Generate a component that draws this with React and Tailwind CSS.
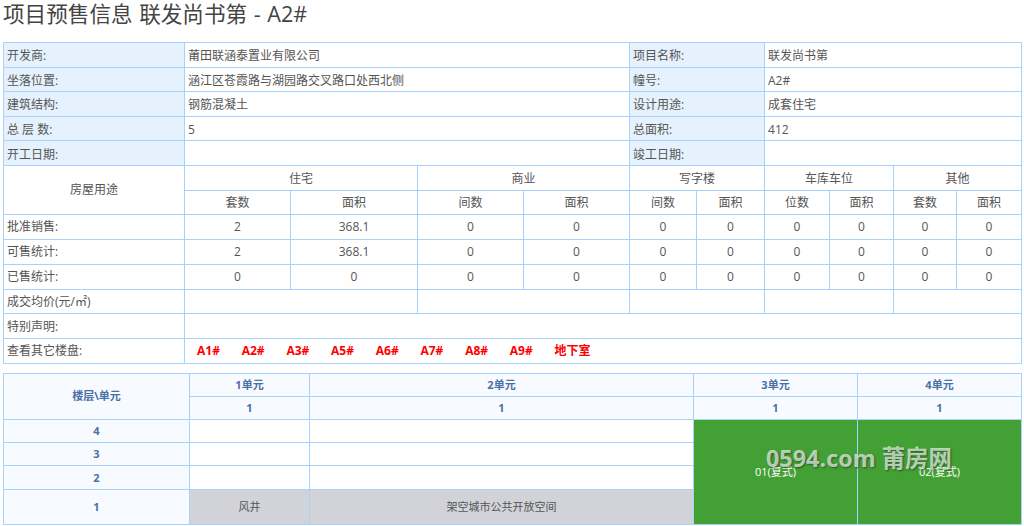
const labelCls = 'border border-[#a6d2fc] bg-[#e5f1fc] pl-[3px] pt-[3px] text-left font-normal'
const infoValueCls = 'border border-[#a6d2fc] pl-[3px] pt-[3px] text-left'
const valueCls = 'border border-[#a6d2fc] pl-[3px] pt-px text-left'
const centerCls = 'border border-[#a6d2fc] pt-px text-center'

const infoRows = [
  ['开发商:', '莆田联涵泰置业有限公司', '项目名称:', '联发尚书第'],
  ['坐落位置:', '涵江区苍霞路与湖园路交叉路口处西北侧', '幢号:', 'A2#'],
  ['建筑结构:', '钢筋混凝土', '设计用途:', '成套住宅'],
  ['总 层 数:', '5', '总面积:', '412'],
  ['开工日期:', '', '竣工日期:', ''],
]

const statRows = [
  ['批准销售:', '2', '368.1'],
  ['可售统计:', '2', '368.1'],
  ['已售统计:', '0', '0'],
]

const subHeads = ['套数', '面积', '间数', '面积', '间数', '面积', '位数', '面积', '套数', '面积']
const topCols = ['w-[181px]', 'w-[106px]', 'w-[127px]', 'w-[106px]', 'w-[106px]', 'w-[67px]', 'w-[68px]', 'w-[65px]', 'w-[64px]', 'w-[63px]', 'w-[65px]']
const links = ['A1#', 'A2#', 'A3#', 'A5#', 'A6#', 'A7#', 'A8#', 'A9#', '地下室']
const typeHeads = ['住宅', '商业', '写字楼', '车库车位', '其他']

function InfoTable() {
  return (
    <table className="ml-[3px] w-[1019px] table-fixed border-collapse text-[12px] text-[#555]">
      <colgroup>
        {topCols.map((c, i) => (
          <col key={i} className={c} />
        ))}
      </colgroup>
      <tbody>
        {infoRows.map((r) => (
          <tr key={r[0]} className="h-[24.6px]">
            <th className={labelCls}>{r[0]}</th>
            <td colSpan={4} className={infoValueCls}>{r[1]}</td>
            <th colSpan={2} className={labelCls}>{r[2]}</th>
            <td colSpan={4} className={infoValueCls}>{r[3]}</td>
          </tr>
        ))}
        <tr className="h-[25px]">
          <td rowSpan={2} className={centerCls}>房屋用途</td>
          {typeHeads.map((h) => (
            <td key={h} colSpan={2} className="border border-[#a6d2fc] pt-[3px] text-center">{h}</td>
          ))}
        </tr>
        <tr className="h-[24px]">
          {subHeads.map((h, i) => (
            <td key={i} className={centerCls}>{h}</td>
          ))}
        </tr>
        {statRows.map((r) => (
          <tr key={r[0]} className="h-[25px]">
            <td className={valueCls}>{r[0]}</td>
            <td className={centerCls}>{r[1]}</td>
            <td className={centerCls}>{r[2]}</td>
            {Array.from({ length: 8 }).map((_, i) => (
              <td key={i} className={centerCls}>0</td>
            ))}
          </tr>
        ))}
        <tr className="h-[24.5px]">
          <td className={valueCls}>成交均价(元/㎡)</td>
          <td colSpan={2} className={valueCls}></td>
          <td colSpan={2} className={valueCls}></td>
          <td colSpan={2} className={valueCls}></td>
          <td colSpan={2} className={valueCls}></td>
          <td colSpan={2} className={valueCls}></td>
        </tr>
        <tr className="h-[24.5px]">
          <td className={valueCls}>特别声明:</td>
          <td colSpan={10} className={valueCls}></td>
        </tr>
        <tr className="h-[25px]">
          <td className={valueCls}>查看其它楼盘:</td>
          <td colSpan={10} className="border border-[#a6d2fc] pt-px pl-[12px]">
            <div className="flex">
              {links.map((l) => (
                <a key={l} href="#" className="w-[44.7px] shrink-0 font-bold whitespace-nowrap text-[#ff0000]">
                  {l}
                </a>
              ))}
            </div>
          </td>
        </tr>
      </tbody>
    </table>
  )
}

const headCls = 'border border-[#a6d2fc] bg-[#f7fbff] text-center font-bold text-[#4a6fa5]'
const blankCls = 'border border-[#a6d2fc] bg-white'
const greyCls = 'border border-[#a6d2fc] bg-[#d1d3d8] text-center font-normal text-[#555]'
const greenCls = 'border border-[#a6d2fc] bg-[#43a035] text-center font-normal text-white'

function FloorTable() {
  return (
    <table className="ml-[3px] w-[1019px] table-fixed border-collapse text-[11px]">
      <colgroup>
        <col className="w-[186px]" />
        <col className="w-[120px]" />
        <col className="w-[384px]" />
        <col className="w-[164px]" />
        <col className="w-[164px]" />
      </colgroup>
      <tbody>
        <tr className="h-[23px]">
          <td rowSpan={2} className={headCls}>楼层\单元</td>
          <td className={headCls}>1单元</td>
          <td className={headCls}>2单元</td>
          <td className={headCls}>3单元</td>
          <td className={headCls}>4单元</td>
        </tr>
        <tr className="h-[23.5px]">
          <td className={headCls}>1</td>
          <td className={headCls}>1</td>
          <td className={headCls}>1</td>
          <td className={headCls}>1</td>
        </tr>
        <tr className="h-[23px]">
          <td className={headCls}>4</td>
          <td className={blankCls}></td>
          <td className={blankCls}></td>
          <td rowSpan={4} className={greenCls}>01(复式)</td>
          <td rowSpan={4} className={greenCls}>02(复式)</td>
        </tr>
        <tr className="h-[23px]">
          <td className={headCls}>3</td>
          <td className={blankCls}></td>
          <td className={blankCls}></td>
        </tr>
        <tr className="h-[24px]">
          <td className={headCls}>2</td>
          <td className={blankCls}></td>
          <td className={blankCls}></td>
        </tr>
        <tr className="h-[34.5px]">
          <td className={headCls}>1</td>
          <td className={greyCls}>风井</td>
          <td className={greyCls}>架空城市公共开放空间</td>
        </tr>
      </tbody>
    </table>
  )
}

export default function App() {
  return (
    <div className="relative h-[526px] w-[1024px] overflow-hidden bg-white font-['Open_Sans','Noto_Sans_CJK_SC',sans-serif]">
      <h1 className="h-[42px] pl-[3px] text-[21.6px] leading-[27px] font-normal [word-spacing:1px] text-[#444]">
        项目预售信息 联发尚书第 - A2#
      </h1>
      <InfoTable />
      <div className="h-[9px]" />
      <FloorTable />
      <div className="absolute top-[444px] left-[766px] text-[23.4px] leading-[28px] font-bold whitespace-nowrap text-white/65 [text-shadow:1px_1px_2px_rgba(0,0,0,0.45)]">
        0594.com 莆房网
      </div>
    </div>
  )
}
